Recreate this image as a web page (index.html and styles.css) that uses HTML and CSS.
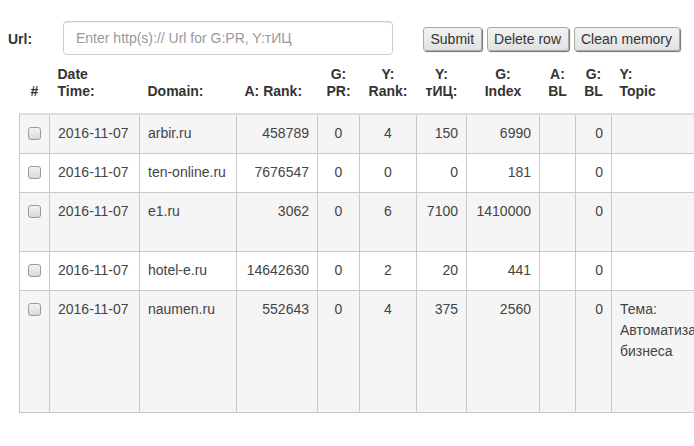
FILE: index.html
```html
<!DOCTYPE html>
<html>
<head>
<meta charset="utf-8">
<title>Url checker</title>
<link rel="stylesheet" href="styles.css">
</head>
<body>
<div class="page">
  <form class="toolbar">
    <label class="url-label" for="url">Url:</label>
    <input class="url-input" id="url" type="text" placeholder="Enter http(s):// Url for G:PR, Y:тИЦ">
    <div class="buttons">
      <button type="button" class="btn">Submit</button>
      <button type="button" class="btn">Delete row</button>
      <button type="button" class="btn">Clean memory</button>
    </div>
  </form>
  <div class="table-wrap">
    <table class="grid">
      <colgroup>
        <col class="c-chk"><col class="c-date"><col class="c-domain"><col class="c-arank"><col class="c-gpr"><col class="c-yrank"><col class="c-tic"><col class="c-index"><col class="c-abl"><col class="c-gbl"><col class="c-topic">
      </colgroup>
      <thead>
        <tr>
          <th class="center">#</th>
          <th>Date<br>Time:</th>
          <th>Domain:</th>
          <th>A: Rank:</th>
          <th class="center">G:<br>PR:</th>
          <th class="center">Y:<br>Rank:</th>
          <th class="center">Y:<br>тИЦ:</th>
          <th class="center">G:<br>Index</th>
          <th class="center">A:<br>BL</th>
          <th class="center">G:<br>BL</th>
          <th>Y:<br>Topic</th>
        </tr>
      </thead>
      <tbody>
        <tr>
          <td><input type="checkbox" class="chk"></td>
          <td>2016-11-07</td><td>arbir.ru</td><td class="right">458789</td>
          <td class="center">0</td><td class="center">4</td><td class="right">150</td><td class="right">6990</td>
          <td class="right"></td><td class="right">0</td><td class="topic"></td>
        </tr>
        <tr>
          <td><input type="checkbox" class="chk"></td>
          <td>2016-11-07</td><td>ten-online.ru</td><td class="right">7676547</td>
          <td class="center">0</td><td class="center">0</td><td class="right">0</td><td class="right">181</td>
          <td class="right"></td><td class="right">0</td><td class="topic"></td>
        </tr>
        <tr>
          <td><input type="checkbox" class="chk"></td>
          <td>2016-11-07</td><td>e1.ru</td><td class="right">3062</td>
          <td class="center">0</td><td class="center">6</td><td class="right">7100</td><td class="right">1410000</td>
          <td class="right"></td><td class="right">0</td><td class="topic"><br>&nbsp;</td>
        </tr>
        <tr>
          <td><input type="checkbox" class="chk"></td>
          <td>2016-11-07</td><td>hotel-e.ru</td><td class="right">14642630</td>
          <td class="center">0</td><td class="center">2</td><td class="right">20</td><td class="right">441</td>
          <td class="right"></td><td class="right">0</td><td class="topic"></td>
        </tr>
        <tr>
          <td><input type="checkbox" class="chk"></td>
          <td>2016-11-07</td><td>naumen.ru</td><td class="right">552643</td>
          <td class="center">0</td><td class="center">4</td><td class="right">375</td><td class="right">2560</td>
          <td class="right"></td><td class="right">0</td><td class="topic">Тема: Автоматизация бизнеса<br><br>&nbsp;</td>
        </tr>
      </tbody>
    </table>
  </div>
</div>
</body>
</html>
```
FILE: styles.css
```css
html, body {
  margin: 0;
  padding: 0;
  background: #fff;
}
body {
  font-family: "Liberation Sans", Arial, sans-serif;
  font-size: 14px;
  line-height: 20px;
  color: #333;
}
.page {
  padding: 21px 0 0 8px;
}
.toolbar {
  display: flex;
  align-items: flex-start;
  margin: 0;
}
.url-label {
  font-weight: bold;
  margin-top: 8px;
  width: 55px;
}
.url-input {
  box-sizing: border-box;
  width: 330px;
  height: 34px;
  padding: 6px 12px;
  font: 14px "Liberation Sans", Arial, sans-serif;
  color: #555;
  border: 1px solid #ccc;
  border-radius: 4px;
  box-shadow: inset 0 1px 1px rgba(0,0,0,.075);
  outline: none;
}
.url-input::placeholder {
  color: #999;
}
.buttons {
  display: flex;
  gap: 5px;
  margin-left: 30px;
  margin-top: 6px;
}
.btn {
  box-sizing: border-box;
  height: 24px;
  padding: 0 6.5px;
  font: 14px "Liberation Sans", Arial, sans-serif;
  color: #333;
  background: linear-gradient(#f2f2f2, #e2e2e2);
  border: 1px solid #a9a9a9;
  border-radius: 3px;
  box-shadow: 1px 1px 1px #6f6f6f;
}
.table-wrap {
  margin: 3px 0 0 11px;
  overflow: hidden;
}
.grid {
  border-collapse: collapse;
  table-layout: fixed;
  width: 722px;
}
.c-chk { width: 30px; }
.c-date { width: 90px; }
.c-domain { width: 97px; }
.c-arank { width: 81px; }
.c-gpr { width: 42px; }
.c-yrank { width: 57px; }
.c-tic { width: 50px; }
.c-index { width: 73px; }
.c-abl { width: 36px; }
.c-gbl { width: 36px; }
.c-topic { width: 130px; }
.grid th {
  font-weight: bold;
  color: #333;
  text-align: left;
  vertical-align: bottom;
  line-height: 17px;
  padding: 8px 8px 13px 8px;
  border-bottom: 2px solid #ddd;
  white-space: nowrap;
}
.grid td {
  color: #444;
  vertical-align: top;
  padding: 8px;
  border: 1px solid #c9c9c9;
  white-space: nowrap;
}
.grid tbody tr:nth-child(odd) td {
  background: #f5f5f5;
}
.grid th.center, .grid td.center {
  text-align: center;
}
.grid td.right {
  text-align: right;
}
.grid td.topic {
  line-height: 21px;
  white-space: normal;
}
.chk {
  -webkit-appearance: none;
  appearance: none;
  display: inline-block;
  box-sizing: border-box;
  width: 13px;
  height: 13px;
  margin: 4px 0 0 0;
  border: 1px solid #9a9a9a;
  border-radius: 3px;
  background: linear-gradient(#f3f3f3, #d9d9d9);
}
```
